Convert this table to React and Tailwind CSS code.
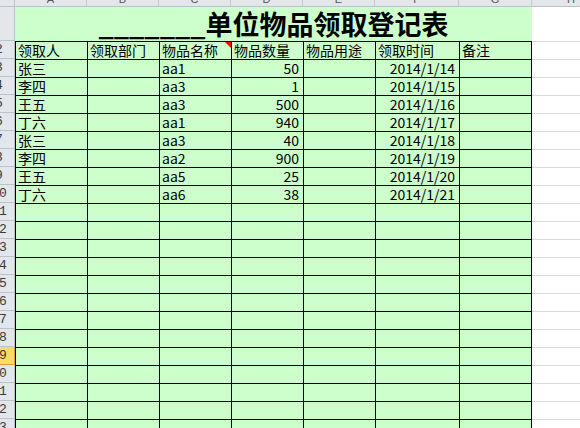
import React from "react";

const cols = [
  { key: "A", w: "w-[72px]" },
  { key: "B", w: "w-[72px]" },
  { key: "C", w: "w-[72px]" },
  { key: "D", w: "w-[72px]" },
  { key: "E", w: "w-[72px]" },
  { key: "F", w: "w-[84px]" },
  { key: "G", w: "w-[73px]" },
];

const headers = ["领取人", "领取部门", "物品名称", "物品数量", "物品用途", "领取时间", "备注"];

const records = [
  ["张三", "aa1", "50", "2014/1/14"],
  ["李四", "aa3", "1", "2014/1/15"],
  ["王五", "aa3", "500", "2014/1/16"],
  ["丁六", "aa1", "940", "2014/1/17"],
  ["张三", "aa3", "40", "2014/1/18"],
  ["李四", "aa2", "900", "2014/1/19"],
  ["王五", "aa5", "25", "2014/1/20"],
  ["丁六", "aa6", "38", "2014/1/21"],
];

const RowHead = ({ n, active }) => (
  <div
    className={
      "flex w-[15px] shrink-0 items-center overflow-hidden border-r border-b " +
      (active ? "bg-[#ffd966] border-[#e0a040]" : "bg-[#e3e6eb] border-[#bcc2ca]")
    }
  >
    <div className="ml-[-16px] w-[30px] shrink-0 text-center font-['Liberation_Mono',monospace] text-[13px] leading-[17px] text-[#3a3a3a]">
      {n}
    </div>
  </div>
);

const Cell = ({ w, last, align = "left", children, flag }) => (
  <div
    className={
      w +
      " relative shrink-0 border-l border-t border-black bg-[#ccffcc] px-[2px] leading-[17px] whitespace-nowrap overflow-hidden " +
      (last ? "border-r " : "") +
      (align === "right" ? "text-right pr-[4px]" : "text-left")
    }
  >
    {children}
    {flag && (
      <span className="absolute right-0 top-0 h-0 w-0 border-l-[6px] border-t-[6px] border-l-transparent border-t-[#ff0000]" />
    )}
  </div>
);

const Row = ({ n, active, cells }) => (
  <div className="flex h-[18px]">
    <RowHead n={n} active={active} />
    {cols.map((c, i) => (
      <Cell key={c.key} w={c.w} last={i === 6} align={cells ? cells[i].align : "left"} flag={cells ? cells[i].flag : false}>
        {cells ? cells[i].text : ""}
      </Cell>
    ))}
    <div className="flex-1 border-t border-[#d9d9d9] bg-white" />
  </div>
);

export default function App() {
  const rows = [];
  rows.push(
    <Row
      key={2}
      n={2}
      cells={headers.map((h, i) => ({ text: h, align: "left", flag: i === 2 }))}
    />
  );
  records.forEach((r, idx) => {
    rows.push(
      <Row
        key={idx + 3}
        n={idx + 3}
        cells={[
          { text: r[0] },
          { text: "" },
          { text: r[1] },
          { text: r[2], align: "right" },
          { text: "" },
          { text: r[3], align: "right" },
          { text: "" },
        ]}
      />
    );
  });
  for (let n = 11; n <= 23; n++) {
    rows.push(<Row key={n} n={n} active={n === 19} />);
  }

  return (
    <div className="h-[428px] w-[580px] overflow-hidden bg-white font-['Noto_Sans_CJK_SC',sans-serif] text-[14px] text-black">
      {/* column letters, mostly scrolled out of view */}
      <div className="flex h-[7px] border-b border-[#bcc2ca] bg-[#e3e6eb]">
        <div className="w-[15px] shrink-0 border-r border-[#bcc2ca]" />
        {cols.map((c) => (
          <div key={c.key} className={c.w + " shrink-0 overflow-hidden border-r border-[#c8ccd2] text-center"}>
            <div className="mt-[-7px] font-['Liberation_Sans',sans-serif] text-[11px] leading-[12px] text-[#555]">{c.key}</div>
          </div>
        ))}
        <div className="w-[78px] shrink-0 overflow-hidden text-center">
          <div className="mt-[-7px] font-['Liberation_Sans',sans-serif] text-[11px] leading-[12px] text-[#555]">H</div>
        </div>
      </div>

      {/* title row */}
      <div className="flex h-[34px]">
        <RowHead n="" />
        <div className="flex w-[517px] shrink-0 items-end justify-center bg-[#ccffcc] pb-[3px]">
          <span className="text-[27px] font-bold leading-[28px] whitespace-nowrap">_______单位物品领取登记表</span>
        </div>
        <div className="flex-1 bg-white" />
      </div>

      {rows}
    </div>
  );
}
